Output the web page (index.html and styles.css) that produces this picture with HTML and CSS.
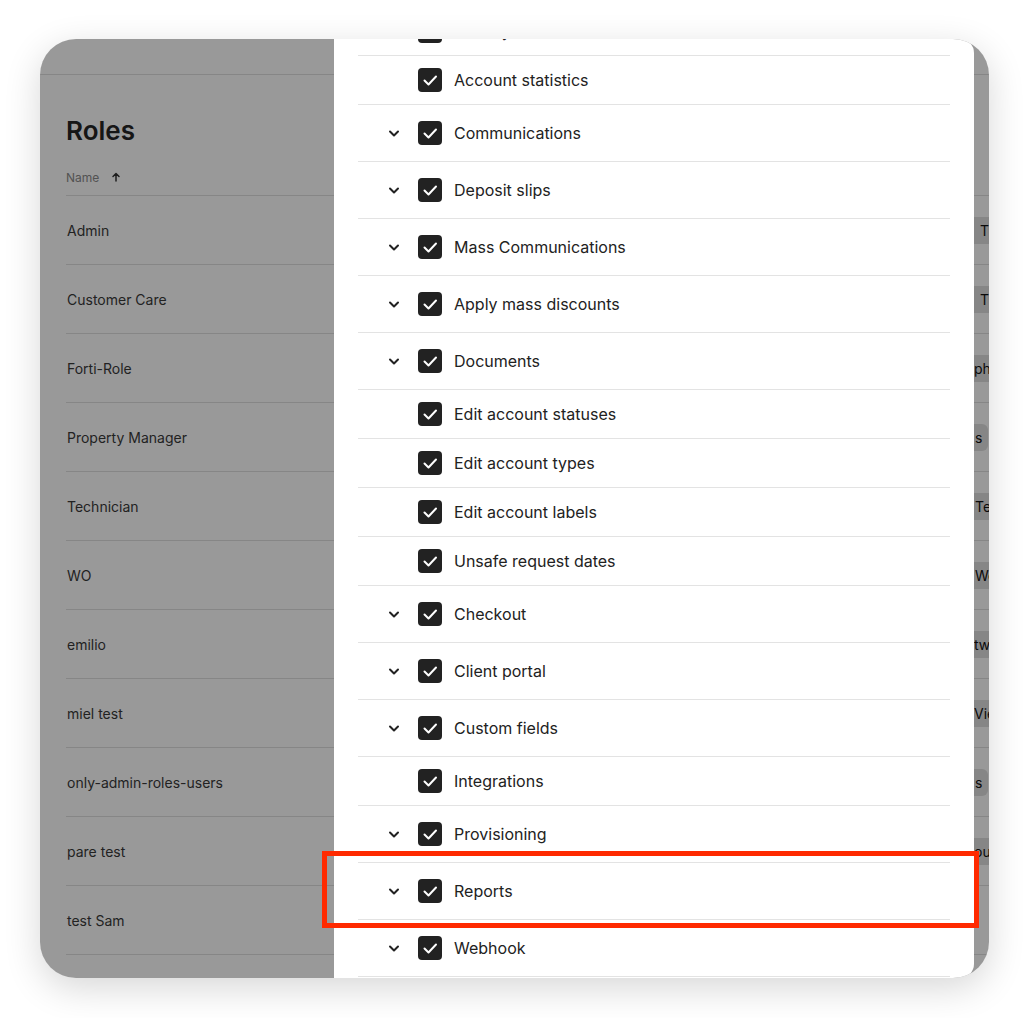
FILE: index.html
```html
<!DOCTYPE html>
<html lang="en">
<head>
    <meta charset="UTF-8">
    <meta name="viewport" content="width=device-width, initial-scale=1.0">
    <title>Roles - Permissions</title>
    <link rel="stylesheet" href="styles.css">
</head>
<body>
    <div class="stage">
        <div class="device">
            <div class="app">
                <header class="topbar"></header>
                <main class="roles">
                    <h1>Roles</h1>
                    <div class="table">
                        <div class="thead">
                            <span class="col-name">Name
                                <svg class="sort" width="10" height="10" viewBox="0 0 10 10"><path d="M5 9V1.5M2 4.5l3-3 3 3" /></svg>
                            </span>
                        </div>
                        <div class="trow"><span class="name">Admin</span><span class="tag t-t">Tier admin</span></div>
                        <div class="trow"><span class="name">Customer Care</span><span class="tag t-t">Tickets</span></div>
                        <div class="trow"><span class="name">Forti-Role</span><span class="tag t-p">phone</span></div>
                        <div class="trow"><span class="name">Property Manager</span><span class="tag">s</span></div>
                        <div class="trow"><span class="name">Technician</span><span class="tag">Tech</span></div>
                        <div class="trow"><span class="name">WO</span><span class="tag">Work</span></div>
                        <div class="trow"><span class="name">emilio</span><span class="tag t-p">twork</span></div>
                        <div class="trow"><span class="name">miel test</span><span class="tag t-p">View</span></div>
                        <div class="trow"><span class="name">only-admin-roles-users</span><span class="tag">s</span></div>
                        <div class="trow"><span class="name">pare test</span><span class="tag t-p">out</span></div>
                        <div class="trow"><span class="name">test Sam</span></div>
                        <div class="trow"><span class="name">viewer</span></div>
                    </div>
                </main>
            </div>

            <div class="scrim"></div>

            <aside class="drawer">
                <ul class="perm-list">
                    <li class="perm">
                        <span class="toggle"></span>
                        <svg class="check" width="24" height="24" viewBox="0 0 24 24"><rect width="24" height="24" rx="4" /><path d="M6.5 12.5l4 4 7.5-8" /></svg>
                        <span class="label">Activity</span>
                    </li>
                    <li class="perm">
                        <span class="toggle"></span>
                        <svg class="check" width="24" height="24" viewBox="0 0 24 24"><rect width="24" height="24" rx="4" /><path d="M6.5 12.5l4 4 7.5-8" /></svg>
                        <span class="label">Account statistics</span>
                    </li>
                    <li class="perm group">
                        <svg class="toggle" width="16" height="16" viewBox="0 0 16 16"><path d="M4 6.5l4 4 4-4" /></svg>
                        <svg class="check" width="24" height="24" viewBox="0 0 24 24"><rect width="24" height="24" rx="4" /><path d="M6.5 12.5l4 4 7.5-8" /></svg>
                        <span class="label">Communications</span>
                    </li>
                    <li class="perm group">
                        <svg class="toggle" width="16" height="16" viewBox="0 0 16 16"><path d="M4 6.5l4 4 4-4" /></svg>
                        <svg class="check" width="24" height="24" viewBox="0 0 24 24"><rect width="24" height="24" rx="4" /><path d="M6.5 12.5l4 4 7.5-8" /></svg>
                        <span class="label">Deposit slips</span>
                    </li>
                    <li class="perm group">
                        <svg class="toggle" width="16" height="16" viewBox="0 0 16 16"><path d="M4 6.5l4 4 4-4" /></svg>
                        <svg class="check" width="24" height="24" viewBox="0 0 24 24"><rect width="24" height="24" rx="4" /><path d="M6.5 12.5l4 4 7.5-8" /></svg>
                        <span class="label">Mass Communications</span>
                    </li>
                    <li class="perm group">
                        <svg class="toggle" width="16" height="16" viewBox="0 0 16 16"><path d="M4 6.5l4 4 4-4" /></svg>
                        <svg class="check" width="24" height="24" viewBox="0 0 24 24"><rect width="24" height="24" rx="4" /><path d="M6.5 12.5l4 4 7.5-8" /></svg>
                        <span class="label">Apply mass discounts</span>
                    </li>
                    <li class="perm group">
                        <svg class="toggle" width="16" height="16" viewBox="0 0 16 16"><path d="M4 6.5l4 4 4-4" /></svg>
                        <svg class="check" width="24" height="24" viewBox="0 0 24 24"><rect width="24" height="24" rx="4" /><path d="M6.5 12.5l4 4 7.5-8" /></svg>
                        <span class="label">Documents</span>
                    </li>
                    <li class="perm">
                        <span class="toggle"></span>
                        <svg class="check" width="24" height="24" viewBox="0 0 24 24"><rect width="24" height="24" rx="4" /><path d="M6.5 12.5l4 4 7.5-8" /></svg>
                        <span class="label">Edit account statuses</span>
                    </li>
                    <li class="perm">
                        <span class="toggle"></span>
                        <svg class="check" width="24" height="24" viewBox="0 0 24 24"><rect width="24" height="24" rx="4" /><path d="M6.5 12.5l4 4 7.5-8" /></svg>
                        <span class="label">Edit account types</span>
                    </li>
                    <li class="perm">
                        <span class="toggle"></span>
                        <svg class="check" width="24" height="24" viewBox="0 0 24 24"><rect width="24" height="24" rx="4" /><path d="M6.5 12.5l4 4 7.5-8" /></svg>
                        <span class="label">Edit account labels</span>
                    </li>
                    <li class="perm">
                        <span class="toggle"></span>
                        <svg class="check" width="24" height="24" viewBox="0 0 24 24"><rect width="24" height="24" rx="4" /><path d="M6.5 12.5l4 4 7.5-8" /></svg>
                        <span class="label">Unsafe request dates</span>
                    </li>
                    <li class="perm group">
                        <svg class="toggle" width="16" height="16" viewBox="0 0 16 16"><path d="M4 6.5l4 4 4-4" /></svg>
                        <svg class="check" width="24" height="24" viewBox="0 0 24 24"><rect width="24" height="24" rx="4" /><path d="M6.5 12.5l4 4 7.5-8" /></svg>
                        <span class="label">Checkout</span>
                    </li>
                    <li class="perm group">
                        <svg class="toggle" width="16" height="16" viewBox="0 0 16 16"><path d="M4 6.5l4 4 4-4" /></svg>
                        <svg class="check" width="24" height="24" viewBox="0 0 24 24"><rect width="24" height="24" rx="4" /><path d="M6.5 12.5l4 4 7.5-8" /></svg>
                        <span class="label">Client portal</span>
                    </li>
                    <li class="perm group">
                        <svg class="toggle" width="16" height="16" viewBox="0 0 16 16"><path d="M4 6.5l4 4 4-4" /></svg>
                        <svg class="check" width="24" height="24" viewBox="0 0 24 24"><rect width="24" height="24" rx="4" /><path d="M6.5 12.5l4 4 7.5-8" /></svg>
                        <span class="label">Custom fields</span>
                    </li>
                    <li class="perm">
                        <span class="toggle"></span>
                        <svg class="check" width="24" height="24" viewBox="0 0 24 24"><rect width="24" height="24" rx="4" /><path d="M6.5 12.5l4 4 7.5-8" /></svg>
                        <span class="label">Integrations</span>
                    </li>
                    <li class="perm group">
                        <svg class="toggle" width="16" height="16" viewBox="0 0 16 16"><path d="M4 6.5l4 4 4-4" /></svg>
                        <svg class="check" width="24" height="24" viewBox="0 0 24 24"><rect width="24" height="24" rx="4" /><path d="M6.5 12.5l4 4 7.5-8" /></svg>
                        <span class="label">Provisioning</span>
                    </li>
                    <li class="perm group">
                        <svg class="toggle" width="16" height="16" viewBox="0 0 16 16"><path d="M4 6.5l4 4 4-4" /></svg>
                        <svg class="check" width="24" height="24" viewBox="0 0 24 24"><rect width="24" height="24" rx="4" /><path d="M6.5 12.5l4 4 7.5-8" /></svg>
                        <span class="label">Reports</span>
                    </li>
                    <li class="perm group">
                        <svg class="toggle" width="16" height="16" viewBox="0 0 16 16"><path d="M4 6.5l4 4 4-4" /></svg>
                        <svg class="check" width="24" height="24" viewBox="0 0 24 24"><rect width="24" height="24" rx="4" /><path d="M6.5 12.5l4 4 7.5-8" /></svg>
                        <span class="label">Webhook</span>
                    </li>
                </ul>
            </aside>
        </div>

        <!-- highlight drawn on top of the screenshot -->
        <div class="callout"></div>
    </div>
</body>
</html>
```

FILE: styles.css
```css
body {
    margin: 0;
    background: #fff;
    font-family: Inter, "Noto Sans", sans-serif;
    color: #222;
}
.stage {
    position: relative;
    padding: 39px 40px 40px;
}
.device {
    position: relative;
    height: 939px;
    border-radius: 36px;
    overflow: hidden;
    background: #fff;
    box-shadow: 0 10px 36px rgba(0, 0, 0, 0.16);
}

/* page underneath the drawer */
.app {
    height: 100%;
}
.topbar {
    height: 35px;
    border-bottom: 1px solid #e0e0e0;
}
.roles {
    padding-left: 26px;
}
h1 {
    margin: 40px 0 12px;
    font-size: 26px;
    line-height: 32px;
    font-weight: 600;
    color: #262626;
}
.thead {
    height: 36px;
    display: flex;
    align-items: center;
    border-bottom: 1px solid #e0e0e0;
    font-size: 12px;
    color: #8a8a8a;
}
.col-name {
    display: flex;
    align-items: center;
    gap: 12px;
}
.sort {
    fill: none;
    stroke: #333;
    stroke-width: 1.5;
    stroke-linecap: round;
    stroke-linejoin: round;
}
.trow {
    height: 68px;
    display: grid;
    grid-template-columns: 900px 1fr;
    align-items: center;
    border-bottom: 1px solid #e0e0e0;
    font-size: 14px;
    color: #3a3a3a;
}
.name {
    padding-left: 1px;
}
.tag {
    justify-self: start;
    height: 27px;
    line-height: 27px;
    padding: 0 6px 0 9px;
    border-radius: 6px;
    background: #e0e0e0;
    color: #111;
    white-space: nowrap;
}
.tag.t-t {
    padding-left: 14px;
}
.tag.t-p {
    padding-left: 8px;
}

.scrim {
    position: absolute;
    inset: 0;
    background: rgba(0, 0, 0, 0.4);
}

/* permissions drawer */
.drawer {
    position: absolute;
    top: 0;
    bottom: 0;
    left: 294px;
    width: 640px;
    background: #fff;
    overflow: hidden;
    border-radius: 0 14px 14px 0;
}
.perm-list {
    list-style: none;
    margin: -32px 0 0;
    padding: 0 24px;
}
.perm {
    display: flex;
    align-items: center;
    min-height: 48px;
    padding-left: 28px;
    border-bottom: 1px solid #e3e3e3;
}
.perm.group {
    min-height: 56px;
}
.toggle {
    flex: 0 0 16px;
    height: 16px;
    margin-right: 16px;
    fill: none;
    stroke: #222;
    stroke-width: 2;
    stroke-linecap: round;
    stroke-linejoin: round;
}
.check {
    flex: 0 0 24px;
    margin-right: 12px;
}
.check rect {
    fill: #222;
}
.check path {
    fill: none;
    stroke: #fff;
    stroke-width: 2;
    stroke-linecap: round;
    stroke-linejoin: round;
}
.label {
    font-size: 16px;
    line-height: 24px;
    color: #222;
}

.callout {
    position: absolute;
    left: 322px;
    top: 851px;
    width: 647px;
    height: 67px;
    border: 5px solid #ff2a00;
}
```
